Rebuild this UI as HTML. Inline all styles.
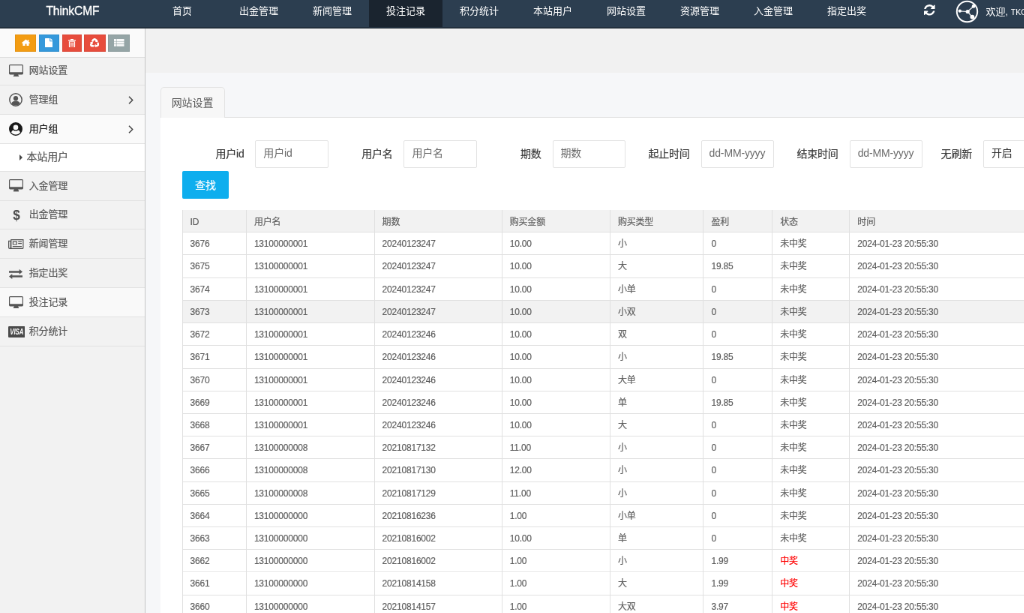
<!DOCTYPE html>
<html lang="zh-CN">
<head>
<meta charset="utf-8">
<title>ThinkCMF</title>
<style>
*{box-sizing:border-box;margin:0;padding:0}
html,body{width:1024px;height:613px;overflow:hidden;background:#f6f7f9}
body{font-family:"Liberation Sans","Noto Sans CJK SC",sans-serif;font-size:13px;color:#333;position:relative}
#app{position:absolute;left:0;top:0;width:1400px;height:830px;transform:scale(.75);will-change:transform;transform-origin:0 0;overflow:hidden;background:#f6f7f9}
/* navbar */
#nav{position:absolute;left:0;top:0;width:1400px;height:38px;background:#2c3e50;border-bottom:1px solid #1a2631;color:#fff}
#nav:after{content:"";position:absolute;left:0;bottom:0;width:100%;height:1px;background:#233241}
#brand{position:absolute;left:0;top:0;width:194px;height:36px;line-height:30px;text-align:center;font-size:15.6px;color:#fff;-webkit-text-stroke:.35px #fff;letter-spacing:-.1px}
.ni{position:absolute;top:0;height:36px;width:98px;line-height:30px;text-align:center;font-size:13px;color:#fff}
.ni.act{background:#1a242f}
#wel{position:absolute;left:1314.5px;top:0;height:36px;line-height:32px;font-size:13px;color:#fff;white-space:nowrap}
#wel small{font-size:10.5px}
/* sidebar */
#side{position:absolute;left:0;top:38px;width:194px;height:800px;background:#f2f2f2;border-right:1px solid #c4c4c4}
#short{position:absolute;left:0;top:0;width:193px;height:39px;background:#fafafa;border-bottom:1px solid #ddd}
.sb{position:absolute;top:7.8px;height:23.2px;box-shadow:inset 0 0 0 1px rgba(0,0,0,.06)}
.sb svg{position:absolute}
.mi{position:absolute;left:0;width:193px;border-bottom:1px solid #e2e2e2;color:#585858;font-size:13px;padding-left:38.7px;letter-spacing:-.15px;-webkit-text-stroke:.2px currentColor;background:#f2f2f2;white-space:nowrap}
.mi svg{position:absolute}
.mi.open{background:#fafafa;color:#1a1a1a}
.mi.hv{background:#f9f9f9}
.mi.sub{background:#fff;color:#5a5a5a;padding-left:35.4px;font-size:14px;letter-spacing:-.1px}
.mi.sub:before{content:"";position:absolute;left:26px;top:13.8px;border-left:4.5px solid #444;border-top:4px solid transparent;border-bottom:4px solid transparent}
/* main */
#band{position:absolute;left:194px;top:38px;width:1210px;height:59px;background:#f1f1f1}
#tabline{position:absolute;left:213.5px;top:155.7px;width:1200px;height:1px;background:#e1e1e1}
#tab{position:absolute;left:213.5px;top:116.3px;width:86px;height:40.5px;border:1px solid #e3e3e3;border-bottom:none;border-radius:5px 5px 0 0;background:#f7f7f7;text-align:center;font-size:14px;line-height:40.5px;color:#555;letter-spacing:-.1px}
#panel{position:absolute;left:213.5px;top:156.7px;width:1200px;height:700px;background:#fff}
.lb{position:absolute;top:187px;height:37px;line-height:36px;width:110px;text-align:right;font-size:14px;color:#3c3c3c;white-space:nowrap;letter-spacing:-.2px;-webkit-text-stroke:.2px currentColor}
.in{position:absolute;top:187px;height:37px;width:97.5px;border:1px solid #e2e2e2;border-radius:2px;background:#fff;font-size:14px;line-height:33.5px;padding-left:10px;color:#6a6a6a;white-space:nowrap;overflow:hidden;letter-spacing:-.15px}
#btn{position:absolute;left:243px;top:228px;width:62px;height:37px;background:#0eaeee;border-radius:2px;color:#fff;font-size:14px;line-height:39px;text-align:center;-webkit-text-stroke:.2px #fff}
table{position:absolute;left:242.5px;top:280.1px;border-collapse:collapse;table-layout:fixed;width:1200px;font-size:12px;color:#5e5e5e;letter-spacing:-.2px;-webkit-text-stroke:.18px currentColor}
th,td{border:1px solid #e0e0e0;padding:7px 0 5px 10px;text-align:left;font-weight:normal;line-height:17.21px;white-space:nowrap}
th{background:#f2f2f2;border-top:none;padding-top:7.6px;padding-bottom:4.4px}
tr.hov td{background:#f2f2f2}
td.win{color:#f00}
</style>
</head>
<body>
<div id="app">
  <div id="band"></div>
  <div id="nav">
    <div id="brand">ThinkCMF</div>
    <div class="ni" style="left:194px">首页</div>
    <div class="ni" style="left:296px">出金管理</div>
    <div class="ni" style="left:394px">新闻管理</div>
    <div class="ni act" style="left:492px">投注记录</div>
    <div class="ni" style="left:590px">积分统计</div>
    <div class="ni" style="left:688px">本站用户</div>
    <div class="ni" style="left:786px">网站设置</div>
    <div class="ni" style="left:884px">资源管理</div>
    <div class="ni" style="left:982px">入金管理</div>
    <div class="ni" style="left:1080px">指定出奖</div>
    <svg id="refresh" style="position:absolute;left:1232px;top:6.3px" width="14.6" height="14.6" viewBox="0 0 1536 1536"><path fill="#fff" d="M1511 928q0 5-1 7-64 268-268 434.500T764 1536q-146 0-282.500-55T238 1324l-129 129q-19 19-45 19t-45-19-19-45V960q0-26 19-45t45-19h448q26 0 45 19t19 45-19 45l-137 137q71 66 161 102t187 36q134 0 250-65t186-179q11-17 53-117 8-23 30-23h192q13 0 22.500 9.500T1511 928zm25-800v448q0 26-19 45t-45 19h-448q-26 0-45-19t-19-45 19-45l138-138Q969 256 768 256q-134 0-250 65T332 500q-11 17-53 117-8 23-30 23H50q-13 0-22.500-9.500T18 608v-7q65-268 270-434.500T768 0q146 0 284 55.500T1297 212l130-129q19-19 45-19t45 19 19 45z"/></svg>
    <svg id="ava" style="position:absolute;left:1274px;top:-0.2px" width="31" height="31" viewBox="0 0 31 31"><circle cx="15.5" cy="15.5" r="13.7" fill="none" stroke="#fff" stroke-width="2"/><g stroke="#fff" stroke-width="1.2"><line x1="5.3" y1="14.8" x2="16" y2="15.5"/><line x1="16" y1="15.5" x2="24.3" y2="8.3"/><line x1="16" y1="15.5" x2="22.3" y2="22.7"/></g><g fill="#fff"><circle cx="5.8" cy="14.6" r="2.2"/><circle cx="16.2" cy="15.5" r="2.6"/><circle cx="24" cy="8.4" r="2.3"/><circle cx="22.4" cy="22.6" r="2.9"/></g></svg>
    <div id="wel">欢迎, <small>TKO</small></div>
  </div>
  <div id="side">
    <div id="short">
      <div class="sb" style="left:20.4px;width:28px;background:#f39c12"><svg style="left:8.600px;top:6.400px" width="11" height="9.500" viewBox="0 0 13 10"><path fill="#fff" d="M6.500 0 13 5.400l-.8 1.100L11.300 5.800V10H7.700V7.200H5.300V10H1.700V5.800L.8 6.500 0 5.400zM9.300.600h1.700v3.200L9.300 2.400z"/></svg></div>
      <div class="sb" style="left:51.600px;width:27.300px;background:#3498db"><svg style="left:8.400px;top:5.500px" width="10.500" height="12" viewBox="0 0 10.500 12"><path fill="#fff" d="M0 .6Q0 0 .6 0H6.200V3.700Q6.200 4.300 6.800 4.300H10.500V11.400Q10.500 12 9.900 12H.6Q0 12 0 11.400zM7.200 0Q7.600 .1 7.900.400L10.100 2.600Q10.400 2.900 10.500 3.300H7.200z"/></svg></div>
      <div class="sb" style="left:82.800px;width:26.200px;background:#e74c3c"><svg style="left:7.800px;top:5.800px" width="10" height="11.500" viewBox="0 0 10 11.500"><path fill="#fff" fill-rule="evenodd" d="M3.400 0h3.200l.8 1.300H10v1.100H0V1.300h2.600zM.9 3.200h8.200v6.800q0 1.500-1.400 1.500H2.300q-1.400 0-1.400-1.500zM2.100 4.300v5.600q0 .5.400.5h5q.4 0 .4-.5V4.300zM3.200 5.100h.9v4.300h-.9zM4.600 5.100h.9v4.300h-.9zM6 5.100h.9v4.300H6z"/></svg></div>
      <div class="sb" style="left:111.700px;width:29.200px;background:#e74c3c"><svg style="left:8.600px;top:5.400px" width="12" height="11.500" viewBox="0 0 12 11.500"><g fill="none" stroke="#fff" stroke-width="2.500" stroke-linecap="butt"><path d="M2.900 4.600Q4.300 1.200 6 1.200T8.900 3.900"/><path d="M10.100 6Q11.600 8.400 10.300 9.500T7.300 10.200"/><path d="M5 10.200Q1.500 10.600 1.300 9T2.300 6.300"/></g><path fill="#fff" d="M6.900 5 10.600 5.200 9.900 1.500zM7.700 7.700v4.300L5.300 10zM0 5.300 3.900 4.800 3.400 8.500z"/></svg></div>
      <div class="sb" style="left:144px;width:29.200px;background:#95a5a6"><svg style="left:8.200px;top:6px" width="13.500" height="9.800" viewBox="0 0 13.500 9.800"><path fill="#fff" d="M0 0h2.900v2.900H0zM3.500 0h10v2.900h-10zM0 3.450h2.900v2.900H0zM3.500 3.450h10v2.900h-10zM0 6.900h2.900v2.900H0zM3.500 6.900h10v2.900h-10z" opacity=".93"/></svg></div>
    </div>
    <div class="mi" style="top:39px;height:37px;line-height:33.4px"><svg style="left:12px;top:8.8px" width="19" height="16.5" viewBox="0 0 19 16.5"><path fill="#555" fill-rule="evenodd" d="M1.6 0h15.8a1.6 1.6 0 0 1 1.6 1.6v10.2a1.6 1.6 0 0 1-1.6 1.6H12.2q.2 1 .9 1.9.2.3.2.5 0 .7-.7.7H6.4q-.7 0-.7-.7 0-.2.2-.5.7-.9.9-1.9H1.6A1.6 1.6 0 0 1 0 11.800V1.6A1.6 1.6 0 0 1 1.600 0zM1.200 1.200v9h16.600v-9z"/></svg>网站设置</div>
    <div class="mi" style="top:76px;height:39px;line-height:37.4px"><svg style="left:12.2px;top:10.3px" width="18" height="18" viewBox="0 0 18 18"><circle cx="9" cy="9" r="8.2" fill="none" stroke="#555" stroke-width="1.5"/><circle cx="9" cy="7.2" r="3.1" fill="#555"/><path fill="#555" d="M3.300 14.200Q4.200 10.600 9 10.600T14.700 14.200Q12.500 16.600 9 16.600T3.300 14.200z"/></svg>管理组<svg style="left:170.5px;top:13.6px" width="7" height="11" viewBox="0 0 7 11"><path d="M1 .8 5.700 5.500 1 10.200" fill="none" stroke="#444" stroke-width="1.500"/></svg></div>
    <div class="mi open" style="top:115px;height:39px;line-height:37.4px"><svg style="left:12.2px;top:10.1px" width="18" height="18" viewBox="0 0 18 18"><path fill="#1a1a1a" fill-rule="evenodd" d="M9 0a9 9 0 1 1 0 18A9 9 0 0 1 9 0zM9 3.600a3.300 3.300 0 1 0 0 6.600 3.300 3.300 0 0 0 0-6.600zM3 13.600Q5.200 16.600 9 16.600T15 13.600Q14.300 10.800 12.300 10.400 10.900 11.600 9 11.600T5.700 10.400Q3.700 10.800 3 13.600z"/></svg>用户组<svg style="left:170.5px;top:13.6px" width="7" height="11" viewBox="0 0 7 11"><path d="M1 .8 5.700 5.500 1 10.200" fill="none" stroke="#444" stroke-width="1.500"/></svg></div>
    <div class="mi sub" style="top:154px;height:37px;line-height:34.3px">本站用户</div>
    <div class="mi" style="top:191px;height:39px;line-height:37.4px"><svg style="left:12px;top:10.1px" width="19" height="16.5" viewBox="0 0 19 16.5"><path fill="#555" fill-rule="evenodd" d="M1.6 0h15.8a1.6 1.6 0 0 1 1.6 1.6v10.2a1.6 1.6 0 0 1-1.6 1.6H12.2q.2 1 .9 1.9.2.3.2.5 0 .7-.7.7H6.4q-.7 0-.7-.7 0-.2.2-.5.7-.9.9-1.9H1.6A1.6 1.6 0 0 1 0 11.800V1.6A1.6 1.6 0 0 1 1.600 0zM1.200 1.200v9h16.600v-9z"/></svg>入金管理</div>
    <div class="mi" style="top:230px;height:38px;line-height:36.4px"><svg style="left:16.5px;top:10.3px" width="10" height="18" viewBox="0 0 10 18"><text x="0.2" y="14.6" textLength="9.4" lengthAdjust="spacingAndGlyphs" font-family="Liberation Sans,sans-serif" font-size="17.5" font-weight="bold" fill="#4d4d4d">$</text></svg>出金管理</div>
    <div class="mi" style="top:268px;height:39px;line-height:37.4px"><svg style="left:11.3px;top:12.7px" width="20.5" height="13" viewBox="0 0 20.5 13"><path fill="#555" fill-rule="evenodd" d="M3.200 0h17.300v11.400a1.600 1.600 0 0 1-1.600 1.600H1.900A1.900 1.900 0 0 1 0 11.100V1.700h3.200zM1.200 2.900v8.200a.7.700 0 0 0 1.400 0V2.900zM4.400 1.200v10.600h14.500a.4.400 0 0 0 .4-.4V1.200zM5.800 2.600h6v5h-6zM7 3.800v2.600h3.600V3.800zM13.200 2.600h4.800v1.200h-4.800zM13.200 5h4.800v1.200h-4.800zM5.800 9h12.200v1.200H5.800z"/></svg>新闻管理</div>
    <div class="mi" style="top:307px;height:39px;line-height:37.4px"><svg style="left:12.4px;top:13.9px" width="18" height="13" viewBox="0 0 18 13"><path fill="#555" d="M0 2.200h13.700V.3q0-.5.400-.1l3.800 3q.2.200 0 .4l-3.800 3q-.4.400-.4-.1V4.800H0zM18 10.800H4.300v1.900q0 .5-.4.100l-3.800-3q-.2-.2 0-.4l3.800-3q.4-.4.400.1v1.700H18z"/></svg>指定出奖</div>
    <div class="mi hv" style="top:346px;height:39px;line-height:37.4px"><svg style="left:12px;top:10.6px" width="19" height="16.5" viewBox="0 0 19 16.5"><path fill="#555" fill-rule="evenodd" d="M1.6 0h15.8a1.6 1.6 0 0 1 1.6 1.6v10.2a1.6 1.6 0 0 1-1.6 1.6H12.2q.2 1 .9 1.9.2.3.2.5 0 .7-.7.7H6.4q-.7 0-.7-.7 0-.2.2-.5.7-.9.9-1.9H1.6A1.6 1.6 0 0 1 0 11.800V1.6A1.6 1.6 0 0 1 1.600 0zM1.200 1.200v9h16.600v-9z"/></svg>投注记录</div>
    <div class="mi" style="top:385px;height:39px;line-height:37.4px"><svg style="left:10.5px;top:12.2px" width="22.5" height="15" viewBox="0 0 22.5 15"><rect width="22.5" height="15" rx="1.200" fill="#4a4a4a"/><text x="2.3" y="11.4" textLength="18" lengthAdjust="spacingAndGlyphs" font-family="Liberation Sans,sans-serif" font-size="10.8" font-weight="bold" font-style="italic" fill="#fff">VISA</text></svg>积分统计</div>
  </div>
  <div id="panel"></div>
  <div id="tabline"></div>
  <div id="tab">网站设置</div>

  <div class="lb" style="left:215.6px">用户id</div><div class="in" style="left:340.3px">用户id</div>
  <div class="lb" style="left:413.6px">用户名</div><div class="in" style="left:538.4px">用户名</div>
  <div class="lb" style="left:611.6px">期数</div><div class="in" style="left:736.5px">期数</div>
  <div class="lb" style="left:809.6px">起止时间</div><div class="in" style="left:934.6px">dd-MM-yyyy</div>
  <div class="lb" style="left:1007.6px">结束时间</div><div class="in" style="left:1132.7px">dd-MM-yyyy</div>
  <div class="lb" style="left:1186px">无刷新</div><div class="in" style="left:1311px;color:#333">开启</div>
  <div id="btn">查找</div>

  <table>
    <colgroup><col style="width:85.4px"><col style="width:170.7px"><col style="width:170.2px"><col style="width:144.2px"><col style="width:124.5px"><col style="width:91.7px"><col style="width:103.2px"><col></colgroup>
    <thead><tr><th>ID</th><th>用户名</th><th>期数</th><th>购买金额</th><th>购买类型</th><th>盈利</th><th>状态</th><th>时间</th></tr></thead>
    <tbody>
<tr><td>3676</td><td>13100000001</td><td>20240123247</td><td>10.00</td><td>小</td><td>0</td><td>未中奖</td><td>2024-01-23 20:55:30</td></tr>
<tr><td>3675</td><td>13100000001</td><td>20240123247</td><td>10.00</td><td>大</td><td>19.85</td><td>未中奖</td><td>2024-01-23 20:55:30</td></tr>
<tr><td>3674</td><td>13100000001</td><td>20240123247</td><td>10.00</td><td>小单</td><td>0</td><td>未中奖</td><td>2024-01-23 20:55:30</td></tr>
<tr class="hov"><td>3673</td><td>13100000001</td><td>20240123247</td><td>10.00</td><td>小双</td><td>0</td><td>未中奖</td><td>2024-01-23 20:55:30</td></tr>
<tr><td>3672</td><td>13100000001</td><td>20240123246</td><td>10.00</td><td>双</td><td>0</td><td>未中奖</td><td>2024-01-23 20:55:30</td></tr>
<tr><td>3671</td><td>13100000001</td><td>20240123246</td><td>10.00</td><td>小</td><td>19.85</td><td>未中奖</td><td>2024-01-23 20:55:30</td></tr>
<tr><td>3670</td><td>13100000001</td><td>20240123246</td><td>10.00</td><td>大单</td><td>0</td><td>未中奖</td><td>2024-01-23 20:55:30</td></tr>
<tr><td>3669</td><td>13100000001</td><td>20240123246</td><td>10.00</td><td>单</td><td>19.85</td><td>未中奖</td><td>2024-01-23 20:55:30</td></tr>
<tr><td>3668</td><td>13100000001</td><td>20240123246</td><td>10.00</td><td>大</td><td>0</td><td>未中奖</td><td>2024-01-23 20:55:30</td></tr>
<tr><td>3667</td><td>13100000008</td><td>20210817132</td><td>11.00</td><td>小</td><td>0</td><td>未中奖</td><td>2024-01-23 20:55:30</td></tr>
<tr><td>3666</td><td>13100000008</td><td>20210817130</td><td>12.00</td><td>小</td><td>0</td><td>未中奖</td><td>2024-01-23 20:55:30</td></tr>
<tr><td>3665</td><td>13100000008</td><td>20210817129</td><td>11.00</td><td>小</td><td>0</td><td>未中奖</td><td>2024-01-23 20:55:30</td></tr>
<tr><td>3664</td><td>13100000000</td><td>20210816236</td><td>1.00</td><td>小单</td><td>0</td><td>未中奖</td><td>2024-01-23 20:55:30</td></tr>
<tr><td>3663</td><td>13100000000</td><td>20210816002</td><td>10.00</td><td>单</td><td>0</td><td>未中奖</td><td>2024-01-23 20:55:30</td></tr>
<tr><td>3662</td><td>13100000000</td><td>20210816002</td><td>1.00</td><td>小</td><td>1.99</td><td class="win">中奖</td><td>2024-01-23 20:55:30</td></tr>
<tr><td>3661</td><td>13100000000</td><td>20210814158</td><td>1.00</td><td>大</td><td>1.99</td><td class="win">中奖</td><td>2024-01-23 20:55:30</td></tr>
<tr><td>3660</td><td>13100000000</td><td>20210814157</td><td>1.00</td><td>大双</td><td>3.97</td><td class="win">中奖</td><td>2024-01-23 20:55:30</td></tr>
<tr><td>3659</td><td>13100000000</td><td>20210814156</td><td>1.00</td><td>小</td><td>0</td><td>未中奖</td><td>2024-01-23 20:55:30</td></tr>
    </tbody>
  </table>
</div>
</body>
</html>
